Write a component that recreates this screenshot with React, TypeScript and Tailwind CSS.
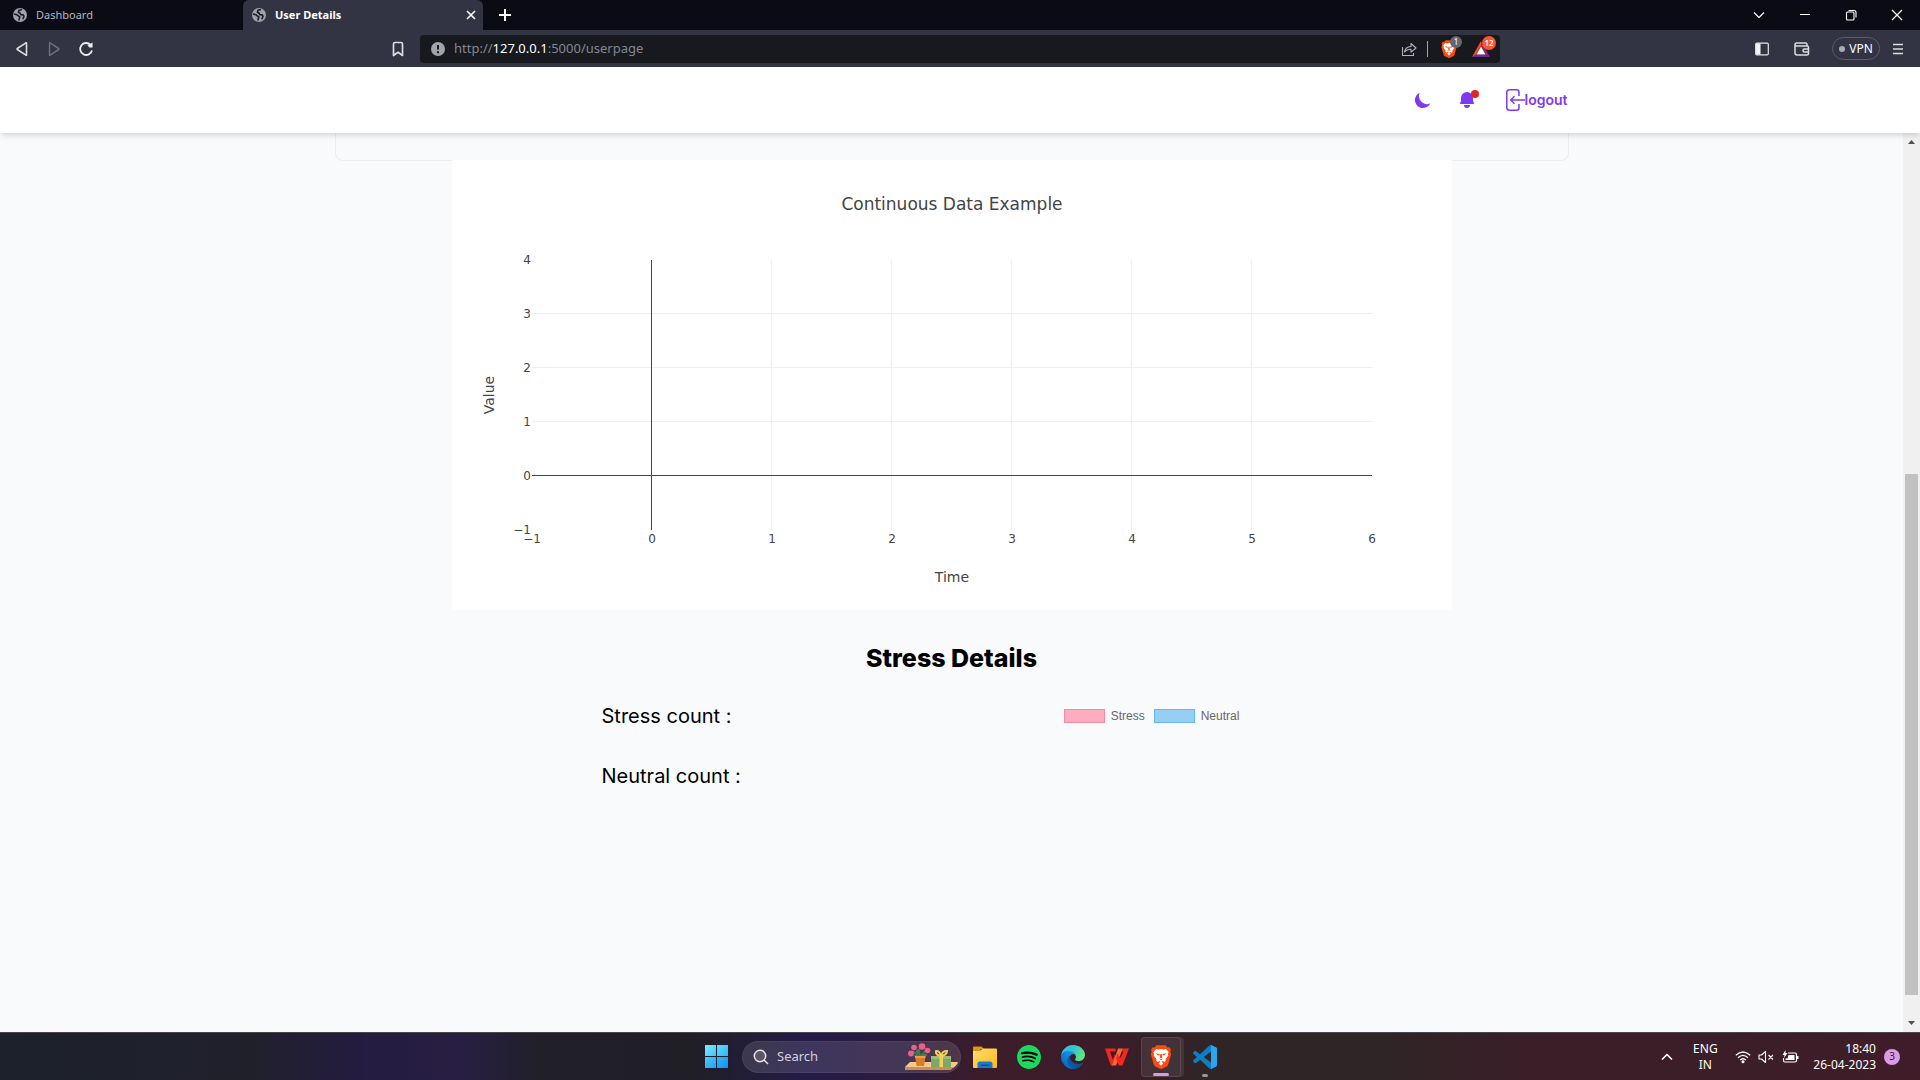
import React from "react";
import { SiSpotify } from "react-icons/si";

const uiFont = "font-['Noto_Sans','Open_Sans',sans-serif]";

function Globe() {
  return (
    <svg viewBox="0 0 14 14" className="size-3.5 shrink-0" aria-hidden="true">
      <circle cx="7" cy="7" r="7" fill="#9fa1ab" />
      <path
        d="M9 1.400 6 2.300 5.400 4.300l1.800.9.6 1.500 2.400.2.8 1.300-1.200 3M1 6l3 .8 1.600 1.400 1.200.6-.4 1.800-.6 1.800"
        fill="none"
        stroke="#1a1b28"
        strokeWidth="1.600"
        strokeLinejoin="round"
      />
    </svg>
  );
}

function Stroke({
  d,
  className = "size-4",
  width = 1.5,
  box = "0 0 16 16",
}: {
  d: string;
  className?: string;
  width?: number;
  box?: string;
}) {
  return (
    <svg viewBox={box} className={className} fill="none" stroke="currentColor" strokeWidth={width} aria-hidden="true">
      <path d={d} strokeLinejoin="round" />
    </svg>
  );
}

function BraveLogo({ className }: { className: string }) {
  return (
    <svg viewBox="0 0 24 24" className={className} aria-hidden="true">
      <path
        d="M7.500.3h9l2 2.200 1.800-.3L22 4.800l-.7 1.900.9 2.500-3 10.300q-.4 1.200-1.500 2l-4.600 2.300q-1.100.5-2.200 0l-4.600-2.300q-1.100-.8-1.500-2L1.800 9.200l.9-2.500L2 4.800l1.700-2.600 1.800.3z"
        fill="#fb4a12"
      />
      <path
        d="M7 4l2.500.6L12 4.100l2.500.5L17 4l2.700 3.300-.9 1.500.6 1.600-2.900 3.500.3 1.800-1.500 1.200-1.600-.9-1.300.7 2 1.500L12 20.700l-2.400-2.500 2-1.500-1.300-.7-1.600.9-1.500-1.200.3-1.800-2.900-3.500.6-1.600-.9-1.500z"
        fill="#fff"
      />
      <path d="M6.600 8.300l3.800.7.2 1.400-2.400-.4zM17.400 8.300l-3.800.7-.2 1.400 2.400-.4zM11.300 9h1.400l.5 3.600-1.200.9-1.200-.9zM9.300 13.200l2.700 1 2.700-1-2.700 2z" fill="#fb4a12" />
    </svg>
  );
}

function TabStrip() {
  return (
    <div className="flex h-[30px] shrink-0 items-stretch bg-[#0b0b15] text-[11px]">
      <button className="flex w-[243px] shrink-0 items-center gap-[9px] pl-[13px] text-[#b4b5bd]">
        <Globe />
        Dashboard
      </button>
      <div className="flex w-60 shrink-0 items-center rounded-t-md bg-[#323443] pr-1 pl-[9px]">
        <button className="flex flex-1 items-center gap-[9px] font-bold text-white">
          <Globe />
          User Details
        </button>
        <button aria-label="Close tab" className="text-white">
          <Stroke d="M4 4l8 8M12 4l-8 8" width={1.7} />
        </button>
      </div>
      <button aria-label="New tab" className="ml-3.5 text-white">
        <Stroke d="M8 2v12M2 8h12" width={2} />
      </button>
      <div className="flex flex-1 justify-end text-white">
        <button aria-label="Search tabs" className="flex w-[46px] items-center justify-center">
          <Stroke d="M3 5.500l5 5 5-5" width={1.1} />
        </button>
        <button aria-label="Minimize" className="flex w-[46px] items-center justify-center">
          <Stroke d="M3 7.500h10" width={1} />
        </button>
        <button aria-label="Restore" className="flex w-[46px] items-center justify-center">
          <Stroke d="M3.500 6q0-1 1-1h5.500q1 0 1 1v6q0 1-1 1H4.500q-1 0-1-1zM5.500 3.500h5.500q2 0 2 2v5" width={1.1} />
        </button>
        <button aria-label="Close window" className="flex w-[46px] items-center justify-center">
          <Stroke d="M3 3l10 10M13 3L3 13" width={1.3} />
        </button>
      </div>
    </div>
  );
}

function Toolbar() {
  return (
    <div className="flex h-[37px] shrink-0 items-center bg-[#323443] text-[#dcdce0]">
      <div className="flex w-[420px] shrink-0 items-center pl-3.5">
        <button aria-label="Back">
          <Stroke d="M12.500 2v12q0 .6-.6.2L3.300 8.500q-.6-.5 0-1l8.600-5.700q.6-.3.6.2z" width={1.6} />
        </button>
        <button aria-label="Forward" className="ml-4 text-[#6b6d7a]">
          <Stroke d="M3.500 2v12q0 .6.6.2l8.600-5.700q.6-.5 0-1L4.100 1.800q-.6-.3-.6.2z" width={1.5} />
        </button>
        <button aria-label="Reload" className="ml-4">
          <svg viewBox="0 0 16 16" className="size-4" fill="none" stroke="#eeeef0" strokeWidth="1.800" aria-hidden="true">
            <path d="M14 9.500A6 6 0 1 1 12.500 3.800" />
            <path d="M14.500 1.500v5h-3l-2-2z" fill="#eeeef0" stroke="none" />
          </svg>
        </button>
        <button aria-label="Bookmark" className="mr-3.5 ml-auto">
          <Stroke d="M3.500 3q0-1.500 1.500-1.500h6q1.500 0 1.500 1.500v11.500L8 11.300l-4.500 3.200z" width={1.7} />
        </button>
      </div>
      <div className="flex h-7 w-[1080px] min-w-0 items-center rounded bg-[#17191f] pr-1 pl-[11px]">
        <svg viewBox="0 0 14 14" className="size-3.5 shrink-0" aria-hidden="true">
          <circle cx="7" cy="7" r="7" fill="#a2a4ad" />
          <path d="M7 3v4.500M7 9.300v1.900" stroke="#17191f" strokeWidth="2" />
        </svg>
        <a href="#userpage" className="ml-[9px] flex-1 text-[13px] text-[#84868f]">
          http://<span className="text-white">127.0.0.1</span>:5000/userpage
        </a>
        <button aria-label="Share" className="text-[#b0b2b8]">
          <Stroke d="M1.500 6v8.500h11V12M3.500 11q.5-5 6.500-5.500V2.500l5 4.500-5 4.200V8.300Q6 8 3.500 11z" width={1.1} />
        </button>
        <span className="mr-3 ml-2.5 h-4 w-px bg-[#a2a4ad]" />
        <button aria-label="Brave Shields" className="relative mr-2.5 w-[22px]">
          <BraveLogo className="size-[18px]" />
          <span className="absolute -top-1 right-0 flex size-3 items-center justify-center rounded-full bg-[#636775] text-[8px] text-white">
            1
          </span>
        </button>
        <button aria-label="Brave Rewards" className="relative w-6">
          <svg viewBox="0 0 18 18" className="size-[18px]" aria-hidden="true">
            <path d="M9 1L0 17l4-2L9 6z" fill="#ff4724" />
            <path d="M9 1l9 16-4-2L9 6z" fill="#9e1f63" />
            <path d="M0 17h18l-4-2.500H4z" fill="#662d91" />
            <path d="M9 6.500l4.500 8h-9z" fill="#fff" />
          </svg>
          <span className="absolute -top-1 right-0 flex size-3.5 items-center justify-center rounded-full bg-[#fb5430] text-[8px] font-semibold text-white">
            12
          </span>
        </button>
      </div>
      <div className="flex flex-1 items-center justify-end pr-4">
        <button aria-label="Sidebar">
          <svg viewBox="0 0 14 14" className="size-3.5" aria-hidden="true">
            <rect x=".7" y="1.200" width="12.600" height="11.600" rx="1" fill="none" stroke="#e4e4e8" strokeWidth="1.200" />
            <path d="M1 1.500h4.500v11H1z" fill="#f4f4f6" />
          </svg>
        </button>
        <button aria-label="Wallet" className="ml-[25px]">
          <Stroke
            d="M1 3v9q0 2 2 2h10q1.500 0 1.500-1.500V6.500Q14.500 5 13 5H2.500Q1 5 1 3.500 1 2 2.500 2h9q1.500 0 1.500 1.500V5M15 8h-4.500q-1.500 0-1.500 1.500T10.500 11H15"
            width={1.5}
          />
        </button>
        <button className="ml-[22px] flex h-[23px] w-12 items-center justify-center gap-1 rounded-full border border-[#5a5d6f] text-xs text-white">
          <span className="size-1.5 rounded-full bg-[#a9abb8]" />
          VPN
        </button>
        <button aria-label="Menu" className="ml-3">
          <Stroke d="M1 1.500h10M1 6h10M1 10.500h10" box="0 0 12 12" className="size-3" width={1.7} />
        </button>
      </div>
    </div>
  );
}

function PageHeader() {
  return (
    <header className="relative z-10 flex h-[66px] shrink-0 items-center bg-white pr-[17px] shadow-md">
      <div className="mx-auto flex w-full max-w-[1232px] items-center justify-end gap-6 text-[#7e3af2]">
        <button aria-label="Toggle color mode">
          <svg viewBox="0 0 20 20" fill="currentColor" className="size-5" aria-hidden="true">
            <path d="M17.293 13.293A8 8 0 016.707 2.707a8.001 8.001 0 1010.586 10.586z" />
          </svg>
        </button>
        <button aria-label="Notifications" className="relative">
          <svg viewBox="0 0 20 20" fill="currentColor" className="size-5" aria-hidden="true">
            <path d="M10 2a6 6 0 00-6 6v3.586l-.707.707A1 1 0 004 14h12a1 1 0 00.707-1.707L16 11.586V8a6 6 0 00-6-6zM10 18a3 3 0 01-3-3h6a3 3 0 01-3 3z" />
          </svg>
          <span className="absolute top-0 -right-0.5 size-2 rounded-full bg-[#e02424]" />
        </button>
        <a href="#logout" className="flex items-center font-[Inter,sans-serif] text-sm font-semibold">
          <svg viewBox="0 0 24 24" className="size-6" fill="none" stroke="currentColor" strokeWidth="1.500" aria-hidden="true">
            <path d="M18 8V4.500Q18 1.700 15.500 1.700H8.500Q5.800 1.700 5.800 4.500v15q0 2.800 2.700 2.800h7q2.500 0 2.500-2.800V16" />
            <path d="M24 12H10M13.500 8.200L9.800 12l3.700 3.800" />
          </svg>
          logout
        </a>
      </div>
    </header>
  );
}

const xTicks = [-1, 0, 1, 2, 3, 4, 5, 6];
const yTicks = [-1, 0, 1, 2, 3, 4];
const xAt = (v: number) => 80 + (v + 1) * 120;
const yAt = (v: number) => 370 - (v + 1) * 54;
const label = (v: number) => String(v).replace("-", "\u2212");

function DataChart() {
  return (
    <svg
      viewBox="0 0 1000 450"
      className="relative w-full max-w-[1000px] bg-white font-['DejaVu_Sans',sans-serif]"
      fill="#444"
      role="img"
      aria-label="Continuous Data Example"
    >
      <g fill="#eee" shapeRendering="crispEdges">
        {xTicks.slice(2, 7).map((v) => (
          <rect key={v} x={xAt(v) - 1} y="100" width="1" height="270" />
        ))}
        {yTicks.slice(2, 5).map((v) => (
          <rect key={v} x="80" y={yAt(v) - 1} width="840" height="1" />
        ))}
      </g>
      <g shapeRendering="crispEdges">
        <rect x={xAt(0) - 1} y="100" width="1" height="270" />
        <rect x="80" y={yAt(0) - 1} width="840" height="1" />
      </g>
      <g fontSize="12" textAnchor="middle">
        {xTicks.map((v) => (
          <text key={v} x={xAt(v)} y="383">
            {label(v)}
          </text>
        ))}
      </g>
      <g fontSize="12" textAnchor="end">
        {yTicks.map((v) => (
          <text key={v} x="79" y={yAt(v) + 4}>
            {label(v)}
          </text>
        ))}
      </g>
      <text x="500" y="50" fontSize="17" textAnchor="middle">
        Continuous Data Example
      </text>
      <text x="500" y="422" fontSize="14" textAnchor="middle">
        Time
      </text>
      <text transform="translate(42 235) rotate(-90)" fontSize="14" textAnchor="middle">
        Value
      </text>
    </svg>
  );
}

function StressDetails() {
  return (
    <section className="flex w-full flex-col items-center font-[Inter,sans-serif] text-black">
      <h2 className="mt-8 text-[25px] leading-8 font-extrabold">Stress Details</h2>
      <div className="mt-7 flex w-full max-w-[700px]">
        <div className="flex flex-1 flex-col gap-8 text-xl leading-7">
          <p>Stress count :</p>
          <p>Neutral count :</p>
        </div>
        <ul className="mt-1.5 flex h-4 w-[300px] justify-center gap-[9px] font-['Liberation_Sans',sans-serif] text-xs leading-4 text-[#666]">
          <li className="flex items-center gap-1.5">
            <span className="h-3.5 w-[41px] border border-[#ff6384]/50 bg-[#ff6384]/50" />
            Stress
          </li>
          <li className="flex items-center gap-1.5">
            <span className="h-3.5 w-[41px] border border-[#36a2eb]/50 bg-[#36a2eb]/50" />
            Neutral
          </li>
        </ul>
      </div>
    </section>
  );
}

function Scrollbar() {
  return (
    <div className="flex w-[17px] shrink-0 flex-col items-center bg-[#f0f0f0] text-[#505050]">
      <svg viewBox="0 0 17 17" className="size-[17px]" fill="currentColor" aria-hidden="true">
        <path d="M5 11h7L8.500 7z" />
      </svg>
      <div className="w-full flex-[324_1_0%]" />
      <div className="w-[13px] flex-[521_1_0%] bg-[#c1c1c1]" />
      <div className="w-full flex-[20_1_0%]" />
      <svg viewBox="0 0 17 17" className="size-[17px]" fill="currentColor" aria-hidden="true">
        <path d="M5 6h7l-3.500 4z" />
      </svg>
    </div>
  );
}

function FlowersArt() {
  return (
    <svg viewBox="0 0 54 28" className="h-7 w-[54px] shrink-0" aria-hidden="true">
      <path d="M0 24l5-5h48q-1 4-7 7H0z" fill="#f3c88f" />
      <path d="M0 24h48l-2 3H0z" fill="#c98f55" />
      <g fill="none" stroke="#3f7d55" strokeWidth="1.800">
        <path d="M15 14L8 8M15 14l-1-8M15 14l6-7M12 12l-3 1M17 12l5 0" />
      </g>
      <g fill="#ee5f86">
        <circle cx="6" cy="10.500" r="3" />
        <circle cx="9" cy="4.500" r="2.800" />
        <circle cx="17" cy="3.500" r="3.300" />
        <circle cx="22.500" cy="7.500" r="2.800" />
        <circle cx="13" cy="8.500" r="2.200" fill="#3f7d55" />
      </g>
      <path d="M10 13h10.500l-1.500 10h-7.500z" fill="#dd7b28" />
      <path d="M10 13h10.500v2H10z" fill="#f29a45" />
      <path d="M26 13h20v11H26z" fill="#7fa667" />
      <path d="M26 13h20v3H26z" fill="#9abb79" />
      <path d="M34.500 12h3.500v12h-3.500z" fill="#f5cf5b" />
      <path d="M36 13q-6-1-5-5 4 0 5 5 1-5 6-5 0 4-6 5" fill="none" stroke="#f5cf5b" strokeWidth="2" />
    </svg>
  );
}

function FolderIcon() {
  return (
    <svg viewBox="0 0 24 24" className="size-6" aria-hidden="true">
      <defs>
        <linearGradient id="folder" x2="1" y2="1">
          <stop stopColor="#ffdf70" />
          <stop offset="1" stopColor="#f8b918" />
        </linearGradient>
      </defs>
      <path d="M0 2.500Q0 1.500 1 1.500h7.500L11 4h-3L6 7H0z" fill="#d89a12" />
      <path d="M0 6h6.500L10 3.500h13q1 0 1 1V22q0 1-1 1H1q-1 0-1-1z" fill="url(#folder)" />
      <path d="M4.500 23v-4q0-2.500 2.500-2.500h10q2.500 0 2.500 2.500v4z" fill="#1b78cf" />
      <path d="M8 19.500h8.500V21H8z" fill="#0b4f97" />
    </svg>
  );
}

function EdgeIcon() {
  return (
    <svg viewBox="0 0 256 256" className="size-6" aria-hidden="true">
      <defs>
        <linearGradient id="edgeA" x1=".2" y1=".6" x2="1" y2=".6">
          <stop stopColor="#0c59a4" />
          <stop offset="1" stopColor="#114a8b" />
        </linearGradient>
        <linearGradient id="edgeB" x1=".9" y1=".2" x2=".3" y2=".9">
          <stop stopColor="#1b9de2" />
          <stop offset=".6" stopColor="#0f7fd6" />
          <stop offset="1" stopColor="#0a67c4" />
        </linearGradient>
        <linearGradient id="edgeC" x2="1" y1=".3" y2=".6">
          <stop stopColor="#35c1f1" />
          <stop offset=".45" stopColor="#34c3d8" />
          <stop offset="1" stopColor="#66eb6e" />
        </linearGradient>
      </defs>
      <path
        fill="url(#edgeA)"
        d="M231.050 190.540a93.730 93.730 0 0 1-10.540 4.710 101.870 101.870 0 0 1-35.900 6.460c-47.320 0-88.540-32.550-88.540-74.320a31.480 31.480 0 0 1 16.430-27.310c-42.800 1.800-53.800 46.400-53.800 72.530 0 73.880 68.090 81.370 82.760 81.370 7.910 0 19.840-2.300 27-4.560l1.310-.44a128.340 128.340 0 0 0 66.600-52.800 4 4 0 0 0-5.320-5.640z"
      />
      <path
        fill="url(#edgeB)"
        d="M105.730 241.420a79.200 79.200 0 0 1-22.740-21.340 80.720 80.720 0 0 1 29.530-120c3.120-1.470 8.450-4.130 15.540-4a32.350 32.350 0 0 1 25.690 13 31.880 31.880 0 0 1 6.360 18.660c0-.21 24.460-79.600-80-79.600-43.900 0-80 41.660-80 78.210a130.150 130.150 0 0 0 12.110 56 128 128 0 0 0 156.380 67.110 75.550 75.550 0 0 1-62.780-8z"
      />
      <path
        fill="url(#edgeC)"
        d="M152.330 148.860c-.81 1.050-3.300 2.500-3.300 5.660 0 2.610 1.700 5.120 4.720 7.230 14.380 10 41.490 8.680 41.560 8.680a59.560 59.560 0 0 0 30.270-8.350 61.380 61.380 0 0 0 30.430-52.880c.26-22.410-8-37.310-11.340-43.910-21.190-41.450-66.930-65.290-116.670-65.290a128 128 0 0 0-128 126.200c.48-36.540 36.800-66.050 80-66.050 3.500 0 23.460.34 42 10.070 16.340 8.580 24.900 18.940 30.850 29.210 6.180 10.670 7.280 24.150 7.280 29.520s-2.740 13.330-7.800 19.910z"
      />
    </svg>
  );
}

function OfficeIcon() {
  return (
    <svg viewBox="0 0 24 24" className="size-6" aria-hidden="true">
      <path d="M0 3.500h10.500v3H5l2.700 8L10 9l1.500 4-3.300 7.500H5.800z" fill="#f5281e" />
      <path d="M13 3.500h5L11 20.500H7z" fill="#ff6436" />
      <path d="M12.500 8.500L15 13.500l3.500-7H17l1.200-3H24l-6.500 17h-3.800l-2.700-7z" fill="#f5281e" />
    </svg>
  );
}

function CodeIcon() {
  return (
    <svg viewBox="0 0 24 24" className="size-6" aria-hidden="true">
      <path
        fill="#0d7dc4"
        d="M23.150 2.587L18.210.21a1.494 1.494 0 0 0-1.705.29l-9.460 8.630-4.120-3.128a.999.999 0 0 0-1.276.057L.327 7.261A1 1 0 0 0 .326 8.740L3.899 12 .326 15.260a1 1 0 0 0 .001 1.479L1.650 17.940a.999.999 0 0 0 1.276.057l4.120-3.128 9.460 8.630a1.492 1.492 0 0 0 1.704.29l4.942-2.377A1.500 1.500 0 0 0 24 20.060V3.939a1.500 1.500 0 0 0-.85-1.352zm-5.146 14.861L10.826 12l7.178-5.448v10.896z"
      />
      <path d="M18 0l5.200 2.600q.8.400.8 1.300v16.200q0 .9-.8 1.300L18 24z" fill="#2ba5f2" />
    </svg>
  );
}

function Taskbar() {
  return (
    <footer className="grid h-12 shrink-0 grid-cols-[1fr_auto_1fr] items-center border-t border-[#4a444c] bg-[linear-gradient(90deg,#1c212b_0%,#20202b_13%,#241c41_19%,#271e42_24%,#21202a_28%,#201f26_36%,#241b48_42%,#2b1b3f_47%,#3c1c29_51%,#3b1d28_58%,#2f2526_63%,#2f2426_72%,#3b1e28_80%,#3b1f28_89%,#401c29_100%)] text-white">
      <div />
      <div className="flex items-center gap-5 pl-0.5">
        <button aria-label="Start" className="-mr-1.5 grid size-[23px] grid-cols-2 gap-px">
          <span className="bg-linear-to-br from-[#7ee9fd] to-[#3fc4fb]" />
          <span className="bg-linear-to-br from-[#62d9fd] to-[#2fb4fb]" />
          <span className="bg-linear-to-br from-[#4bcafc] to-[#1fa3fa]" />
          <span className="bg-linear-to-br from-[#33b5fb] to-[#0c91f7]" />
        </button>
        <label className="-mr-2 flex h-8 w-[219px] items-center rounded-full border border-white/5 bg-white/12 pr-px pl-2.5">
          <svg viewBox="0 0 16 16" className="size-4 shrink-0" fill="none" stroke="#e6e2ea" strokeWidth="1.500" aria-hidden="true">
            <circle cx="7" cy="7" r="5.700" fill="#5b5366" />
            <path d="M11 11l4 4" />
          </svg>
          <input
            type="text"
            placeholder="Search"
            aria-label="Search"
            className="ml-2 w-0 min-w-0 flex-1 bg-transparent text-[13px] text-white outline-none placeholder:text-[#d5d0dc]"
          />
          <FlowersArt />
        </label>
        <button aria-label="File Explorer">
          <FolderIcon />
        </button>
        <button aria-label="Spotify" className="rounded-full bg-black">
          <SiSpotify className="size-6 text-[#1ed760]" />
        </button>
        <button aria-label="Edge">
          <EdgeIcon />
        </button>
        <button aria-label="WPS Office">
          <OfficeIcon />
        </button>
        <button
          aria-label="Brave"
          className="relative -mx-2 flex size-10 items-center justify-center rounded border border-white/10 bg-white/8 shadow-[3px_0_0_0_rgba(255,255,255,0.08)]"
        >
          <BraveLogo className="size-6" />
          <span className="absolute bottom-0 left-1/2 h-[3px] w-4 -translate-x-1/2 rounded-full bg-[#d79be6]" />
        </button>
        <button aria-label="Visual Studio Code" className="relative flex h-10 items-center">
          <CodeIcon />
          <span className="absolute bottom-0 left-1/2 h-[3px] w-1.5 -translate-x-1/2 rounded-full bg-[#9c9498]" />
        </button>
      </div>
      <div className="flex items-center justify-end pr-5">
        <button aria-label="Hidden icons">
          <Stroke d="M3 10.500l5-5 5 5" width={1.6} />
        </button>
        <button className="ml-3.5 w-8 text-center text-xs leading-4">
          ENG
          <br />
          IN
        </button>
        <button aria-label="Network, sound and battery" className="ml-3.5 flex items-center gap-[7px]">
          <svg viewBox="0 0 16 16" className="size-4" fill="none" stroke="#fff" strokeWidth="1.300" aria-hidden="true">
            <path d="M.8 6.300q7.200-6.600 14.400 0M3 8.700q5-4.600 10 0M5.200 11q2.800-2.600 5.600 0" />
            <circle cx="8" cy="12.800" r="1.500" fill="#fff" stroke="none" />
          </svg>
          <Stroke d="M1 6h2.500L7.500 2.500v11L3.500 10H1zM10.500 6l4.500 4.500M15 6l-4.500 4.500" width={1.1} />
          <svg viewBox="0 0 18 16" className="h-4 w-[18px]" aria-hidden="true">
            <path d="M7 4h7q1.500 0 1.500 1.500v6Q15.500 13 14 13H4q-1.500 0-1.500-1.500V9" fill="none" stroke="#fff" strokeWidth="1.200" />
            <path d="M7.500 6h6v5h-9V9.500h2z" fill="#fff" />
            <path d="M16 7h1.500v3H16z" fill="#fff" />
            <path d="M4.500 1L1.500 6h2L3 9l3.500-5h-2z" fill="#fff" />
          </svg>
        </button>
        <button className="ml-3.5 text-right text-xs leading-4">
          18:40
          <br />
          26-04-2023
        </button>
        <button className="ml-2 flex size-4 items-center justify-center rounded-full bg-[#dc9be9] text-[10px] text-[#2b1b2f]">
          3
        </button>
      </div>
    </footer>
  );
}

export default function App() {
  return (
    <div className={`flex h-screen flex-col overflow-hidden ${uiFont}`}>
      <TabStrip />
      <Toolbar />
      <PageHeader />
      <div className="flex min-h-0 flex-1 bg-[#f9fafc]">
        <main className="flex min-w-0 flex-1 flex-col items-center overflow-hidden">
          <div className="-mb-px h-7 w-full max-w-[1234px] shrink-0 rounded-b-lg border border-t-0 border-[#ededef]" />
          <DataChart />
          <StressDetails />
        </main>
        <Scrollbar />
      </div>
      <Taskbar />
    </div>
  );
}
